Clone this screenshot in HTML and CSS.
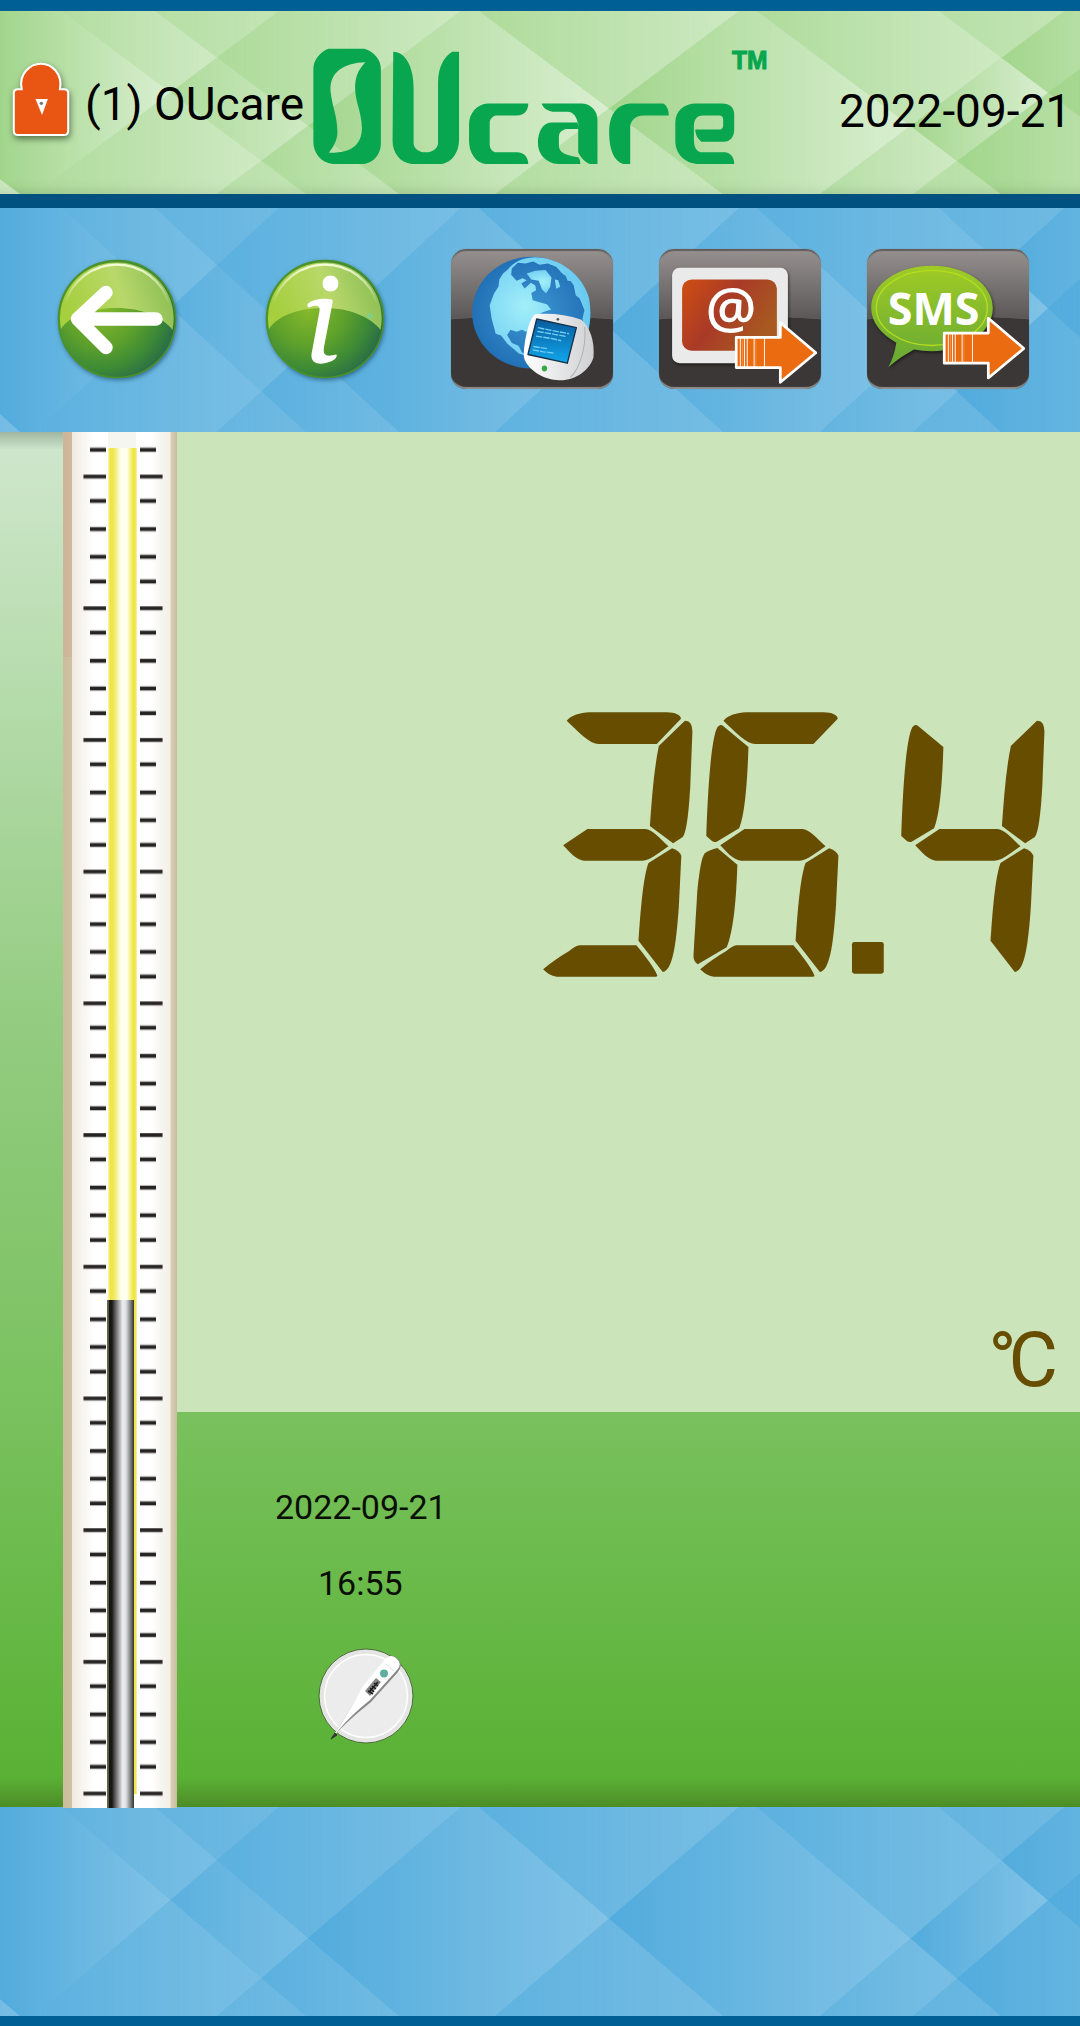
FILE: index.html
```html
<!DOCTYPE html>
<html lang="en">
<head>
<meta charset="utf-8">
<title>OUcare</title>
<link rel="stylesheet" href="styles.css">
</head>
<body>
<svg class="defs" width="0" height="0" aria-hidden="true">
  <defs>
    <linearGradient id="facet"><stop offset="0" stop-color="#fff" stop-opacity="0"/><stop offset="1" stop-color="#fff"/></linearGradient>
    <linearGradient id="facetSoft"><stop offset="0" stop-color="#fff" stop-opacity=".2"/><stop offset="1" stop-color="#fff" stop-opacity=".8"/></linearGradient>
    <symbol id="facets" viewBox="0 0 1080 100" preserveAspectRatio="none">
      <g fill="url(#facet)">
        <path d="M0 0H62L170.5 44.5 27.5 103 0 92Z"/>
        <path d="M308 62.7 470-3.7 609 53.3 447 119.7Z"/>
        <path d="M609 53.3 748-3.7 910.5 62.9 771.5 119.9Z"/>
        <path d="M910.5 62.9 1001.5 25.6 1048 44.7 957 82Z"/>
        <path d="M1001.5 25.6 1182-48 1228-29 1048 44.7Z"/>
        <path d="M1048 44.7 1228-29 1450 61 1269 135Z"/>
        <path d="M957 82 1048 44.7 1269 135 1178 172.7Z"/>
      </g>
      <g fill="url(#facetSoft)">
        <path d="M-112 92H0L20 100H-112Z"/>
        <path d="M170.5 44.5 217 25.4 308 62.7 261.5 81.8Z"/>
        <path d="M217 25.4 379-41 470-3.7 308 62.7Z"/>
        <path d="M31-12.7 77.5-32 217 25.4 170.5 44.5Z"/>
        <path d="M77.5-32 239-98 379-41 217 25.4Z"/>
        <path d="M27.5 103 170.5 44.5 261.5 81.8 118.5 140Z"/>
        <path d="M118.5 140 261.5 81.8 400.5 138.7 257.5 197Z"/>
        <path d="M261.5 81.8 308 62.7 447 119.7 400.5 138.7Z"/>
        <path d="M470-3.7 609-60.7 748-3.7 609 53.3Z"/>
        <path d="M447 119.7 609 53.3 771.5 119.9 609.5 186Z"/>
        <path d="M748-3.7 839-41 1001.5 25.6 910.5 62.9Z"/>
        <path d="M771.5 119.9 910.5 62.9 957 82 818 139Z"/>
        <path d="M818 139 957 82 1178 172.7 1039 230Z"/>
        <path d="M839-41 1019.5-115 1182-48 1001.5 25.6Z"/>
      </g>
    </symbol>

    <radialGradient id="orb" cx=".36" cy=".42" r=".68"><stop offset="0" stop-color="#86b92b"/><stop offset=".45" stop-color="#5fa12b"/><stop offset=".75" stop-color="#3c8a36"/><stop offset="1" stop-color="#27684a"/></radialGradient>
    <linearGradient id="orbShine" x1="0" y1=".4" x2="1" y2=".2"><stop offset="0" stop-color="#a5cf3d"/><stop offset=".5" stop-color="#b9d86a"/><stop offset="1" stop-color="#86bb52"/></linearGradient>
    <linearGradient id="rim" x1="0" y1="0" x2="0" y2="1"><stop offset="0" stop-color="#f4fbd8"/><stop offset="1" stop-color="#f4fbd8" stop-opacity="0"/></linearGradient>
    <symbol id="orbBase" viewBox="0 0 124 124">
      <circle cx="62" cy="62" r="58.500" fill="url(#orb)" stroke="#4c9127" stroke-width="1.500"/>
      <path d="M6 72A56 56 0 0 1 62 5.500A56 56 0 0 1 117.500 73C108 60 86 51 62 51S16 57 6 72Z" fill="url(#orbShine)"/>
      <path d="M10 47A54 54 0 0 1 114 47" fill="none" stroke="url(#rim)" stroke-width="2.200"/>
    </symbol>
    <symbol id="arrow" viewBox="0 0 240 192" preserveAspectRatio="none">
      <path d="M5 52H133V8L236 98 133 186V142H5Z" fill="#eb6b10" stroke="#fff" stroke-width="8" stroke-linejoin="round"/>
      <path d="M17 52V142M29 52V142M37 52V142M57 52V142M87 52V142" stroke="#fff" stroke-width="3" opacity=".9"/>
      <path d="M23 52V142M62 52V142" stroke="#fff" stroke-width="1" opacity=".7"/>
    </symbol>
    <linearGradient id="mail" x1="0" y1="0" x2="1" y2=".5"><stop offset="0" stop-color="#cf4f12"/><stop offset=".5" stop-color="#a93a27"/><stop offset="1" stop-color="#a85a20"/></linearGradient>
    <linearGradient id="bubble" x1="0" y1="0" x2="0" y2="1"><stop offset="0" stop-color="#a0cb26"/><stop offset="1" stop-color="#66a834"/></linearGradient>
    <radialGradient id="sea" cx=".5" cy=".5" r=".55"><stop offset="0" stop-color="#3d97d4"/><stop offset="1" stop-color="#1f6db3"/></radialGradient>
    <radialGradient id="land" cx=".35" cy=".5" r=".7"><stop offset="0" stop-color="#a2effa"/><stop offset="1" stop-color="#62c5ef"/></radialGradient>
    <linearGradient id="screen" x1="0" y1="0" x2="0" y2="1"><stop offset="0" stop-color="#075c9f"/><stop offset="1" stop-color="#12a6ea"/></linearGradient>
    <linearGradient id="shell"><stop offset="0" stop-color="#fff"/><stop offset="1" stop-color="#cfd0d2"/></linearGradient>

    <linearGradient id="tube">
      <stop offset="0" stop-color="#ccbd9c"/><stop offset=".075" stop-color="#cfc0a3"/><stop offset=".082" stop-color="#efe9df"/>
      <stop offset=".16" stop-color="#f7f3ed"/><stop offset=".27" stop-color="#fff"/><stop offset=".78" stop-color="#fff"/>
      <stop offset=".87" stop-color="#f6f4ee"/><stop offset=".935" stop-color="#f3f0e8"/><stop offset=".95" stop-color="#d9cfba"/><stop offset="1" stop-color="#c9bc9c"/>
    </linearGradient>
    <linearGradient id="bore">
      <stop offset="0" stop-color="#fdf7b0"/><stop offset=".08" stop-color="#ede542"/><stop offset=".2" stop-color="#efe85a"/><stop offset=".45" stop-color="#fffff0"/>
      <stop offset=".65" stop-color="#fffff0"/><stop offset=".85" stop-color="#f0e94e"/><stop offset=".93" stop-color="#eee43c"/><stop offset="1" stop-color="#fdf0b8"/>
    </linearGradient>
    <linearGradient id="mercury">
      <stop offset="0" stop-color="#6c6a52"/><stop offset=".07" stop-color="#55533e"/><stop offset=".09" stop-color="#15140f"/><stop offset=".18" stop-color="#191919"/><stop offset=".4" stop-color="#8f8f8f"/>
      <stop offset=".58" stop-color="#ededed"/><stop offset=".7" stop-color="#dfe1e2"/><stop offset=".88" stop-color="#777b7c"/><stop offset="1" stop-color="#35342a"/>
    </linearGradient>
    <pattern id="scale" width="114" height="131.7" y="42.500" patternUnits="userSpaceOnUse">
      <path d="M20.500 2H43M77 2H99.500M27 26.400H43M77 26.400H93M27 54.700H43M77 54.700H93M27 82.300H43M77 82.300H93M27 107H43M77 107H93" stroke="#777" stroke-width="5.500" opacity=".4"/>
      <path d="M20.500 2H43M77 2H99.500M27 26.400H43M77 26.400H93M27 54.700H43M77 54.700H93M27 82.300H43M77 82.300H93M27 107H43M77 107H93" stroke="#262322" stroke-width="3.400"/>
    </pattern>

    <path id="segA" d="M132 92C145 76 170 68 195 67H412C436 67 452 76 452 86L384 162H222C195 162 165 125 132 92Z"/>
    <path id="segB" d="M463 92C476 92 483 100 484 125L478 290C472 400 464 430 457 441L430 460 365 408C370 330 376 240 390 168Z"/>
    <path id="segC" d="M427 475C440 480 449 486 453 497L446 650C438 770 428 840 401 846L333 752C338 670 346 560 361 519Z"/>
    <path id="segD" d="M168 766H327C350 795 378 835 386 857Q385 860 381 860H104C88 858 78 850 66 838C88 818 115 798 139 783C150 774 160 767 168 766Z"/>
    <path id="segE" d="M554 474 610 524C607 620 600 720 580 772L499 823C490 815 487 808 487 797L498 600C504 540 510 500 519 490C528 482 540 478 554 474Z"/>
    <path id="segF" d="M563 105Q568 105 571 109L641 171C638 270 632 370 615 415L552 455Q545 457 539 453L523 438C526 340 534 150 554 112Q558 106 563 105Z"/>
    <path id="segG" d="M190 417H352C372 418 392 444 417 469C390 488 366 512 344 512H180C158 510 138 484 122 466Z"/>
  </defs>
</svg>

<div class="app">
  <header class="header">
    <svg class="facets"><use href="#facets"/></svg>
    <svg class="lock" viewBox="30 180 180 255" preserveAspectRatio="none">
      <path d="M64 268C54 220 90 191 120 191S184 220 175 268H187Q199 268 199 280V392Q199 405 186 405H54Q41 405 41 392V280Q41 268 53 268Z" fill="#e95513" stroke="#fff" stroke-width="6"/>
      <path d="M104 297H140L123 345Z" fill="#fff"/><circle cx="121" cy="310" r="5" fill="#777"/>
    </svg>
    <span class="user">(1) OUcare</span>
    <svg class="logo" viewBox="905 145 1330 355" preserveAspectRatio="none" role="img" aria-label="OUcare">
      <g fill="#08a64e">
        <path fill-rule="evenodd" d="M953 147H1057C1085 155 1105 180 1105 208V432C1105 462 1085 494 1048 494H965C930 490 909 460 909 428V208C909 180 930 155 953 147ZM1060 188C1000 190 955 215 959 276C963 320 978 345 979 400C978 425 965 445 954 460C1015 462 1050 440 1050 385C1048 330 1030 310 1030 260C1032 225 1042 208 1060 188Z"/>
        <path d="M1141 156C1175 156 1200 200 1200 265V430C1200 447 1215 459 1235 459S1271 447 1271 430V250C1271 200 1290 170 1312 156H1332V420C1332 465 1305 494 1275 494H1195C1160 490 1139 460 1139 425Z"/>
        <path d="M1415 312H1533C1533 333 1522 348 1500 348H1440C1428 350 1421 360 1421 370V435C1421 448 1430 459 1441 459H1500C1522 459 1533 475 1533 494H1408C1380 490 1361 460 1361 425V375C1361 340 1385 314 1415 312Z"/>
        <path fill-rule="evenodd" d="M1572 312H1690C1716 314 1734 335 1734 362V494H1713C1700 492 1685 475 1678 459V385C1678 350 1660 337 1648 337H1610C1590 337 1575 325 1572 312ZM1600 369H1678V389H1645C1630 391 1622 400 1622 412V440C1622 458 1640 468 1678 474C1683 478 1684 486 1684 494H1620C1585 492 1561 465 1561 430C1562 395 1575 370 1600 369Z"/>
        <path d="M1830 312H1925C1935 318 1941 330 1941 348H1868C1842 348 1829 365 1829 385V494H1812C1785 490 1768 455 1768 400C1768 345 1790 315 1830 312Z"/>
        <path fill-rule="evenodd" d="M2020 312H2095C2120 312 2131 325 2131 345V390C2131 412 2120 427 2100 427H2036C2025 418 2018 405 2018 390H2088C2096 390 2099 385 2099 378V360C2099 352 2095 348 2088 348H2040C2022 349 2014 360 2014 380V420C2014 445 2022 459 2040 459H2105C2122 462 2131 475 2131 494H2022C1985 490 1960 462 1960 425V370C1960 335 1985 312 2020 312Z"/>
      </g>
      <text class="tm" x="2125" y="209" textLength="103" lengthAdjust="spacingAndGlyphs">TM</text>
    </svg>
    <time class="today">2022-09-21</time>
  </header>

  <nav class="toolbar">
    <svg class="facets"><use href="#facets"/></svg>
    <a class="orb" aria-label="Back"><svg viewBox="0 0 124 124"><use href="#orbBase"/><path d="M23 62H101M51 35.500 22.500 62 51 90.500" fill="none" stroke="#fff" stroke-width="13.500" stroke-linecap="round" stroke-linejoin="round"/></svg></a>
    <a class="orb" aria-label="Info"><svg viewBox="0 0 124 124"><use href="#orbBase"/><circle cx="67.500" cy="26.500" r="8" fill="#fff"/><path d="M44.500 47C50 42 60 41 69 42.500Q70 43 69.500 46L61 90C59.500 99 64 100 73 97.500Q75 98 72 102C64 108 47 110 48.500 97L56.500 54C57.500 48.500 53 47.500 46 50.500Q44 50 44.500 47Z" fill="#fff"/><circle cx="107" cy="59" r="3" fill="#7ad09a" opacity=".7"/></svg></a>
    <a class="tile" aria-label="Web">
      <svg viewBox="37 27 482 418" preserveAspectRatio="none">
        <ellipse cx="276" cy="217" rx="176" ry="167" fill="url(#sea)"/>
        <path d="M181 117 192 100 206 88C225 65 250 54 285 52C360 52 430 105 448 175C455 215 452 260 440 285L428 235 434 210 420 175 408 165 402 135 385 112 368 100 350 80 325 70 300 74 282 64 258 70 236 68 218 85 216 104 232 122 250 114 262 120 246 130 256 145 275 128 288 136 290 150 276 158 280 180 300 186 322 192 335 208 310 216 290 226 272 262 262 275 248 268 232 274 214 268 204 284 218 308 238 316 248 335 262 345 240 340 205 310 186 285 170 280 158 235 152 195 165 160 178 140Z" fill="url(#land)"/>
        <path d="M262 100 288 92 318 90 336 112 332 140 320 160 308 148 298 122 276 118ZM346 118 356 120 362 140 350 146ZM372 90 392 108 400 124 384 122Z" fill="url(#land)"/>
        <path d="M287 222C330 218 380 222 425 238C450 260 465 300 461 350C450 390 400 425 350 418C310 415 262 385 254 350C252 320 265 240 287 222Z" fill="url(#shell)"/>
        <path d="M435 260C440 320 420 385 392 410" fill="none" stroke="#aeb0b2" stroke-width="3"/>
        <path d="M292 236 410 262 383 368 266 342Z" fill="url(#screen)" stroke="#16314a" stroke-width="4" stroke-linejoin="round"/>
        <path d="M296 262 335 270 388 280M294 273 345 282 380 288M290 287 340 295 365 301M282 318 325 325M280 328 312 334 345 338" stroke="#72cdf5" stroke-width="4" fill="none" stroke-dasharray="19 3"/>
        <ellipse cx="315" cy="384" rx="8" ry="9" fill="#35a84a"/><circle cx="355" cy="237" r="4" fill="#555"/>
      </svg>
    </a>
    <a class="tile" aria-label="Email">
      <svg viewBox="346 147 470 418" preserveAspectRatio="none">
        <rect class="lift" x="384" y="203" width="336" height="285" rx="22" fill="#ebeaea"/>
        <rect x="413" y="238" width="275" height="213" rx="28" fill="url(#mail)"/>
        <text class="at" x="555" y="382">@</text>
        <use href="#arrow" x="565" y="359" width="240" height="192"/>
      </svg>
    </a>
    <a class="tile" aria-label="Send SMS">
      <svg viewBox="950 147 470 418" preserveAspectRatio="none">
        <path class="lift" d="M1138 197C1235 197 1315 250 1315 323S1235 452 1138 452Q1110 452 1086 447C1065 460 1040 475 1012 500Q1030 465 1035 427C990 400 962 365 962 323C962 250 1041 197 1138 197Z" fill="url(#bubble)"/>
        <ellipse cx="1138" cy="323" rx="161" ry="112" fill="none" stroke="#b4dc20" stroke-width="4"/>
        <text class="sms" x="1143" y="375" textLength="266" lengthAdjust="spacingAndGlyphs">SMS</text>
        <use href="#arrow" x="1169" y="346" width="240" height="192"/>
      </svg>
    </a>
  </nav>

  <main class="reading">
    <svg class="thermometer" viewBox="0 0 114 1376" role="img" aria-label="Thermometer scale">
      <rect width="114" height="1376" fill="url(#tube)"/>
      <rect width="9" height="225" fill="#cfa58a" opacity=".25"/>
      <rect x="45" width="28" height="18" fill="#f6f6f0"/>
      <rect x="45" y="16" width="29" height="1346" fill="url(#bore)"/>
      <rect width="114" height="1376" fill="url(#scale)"/>
      <rect x="44" y="868" width="27" height="508" fill="url(#mercury)"/>
    </svg>
    <div class="panel">
      <section class="lcd">
        <svg class="digits" viewBox="60 60 1420 810" preserveAspectRatio="none" role="img" aria-label="36.4">
          <g fill="#664d00">
            <use href="#segA"/><use href="#segB"/><use href="#segC"/><use href="#segD"/><use href="#segG"/>
            <use href="#segA" x="439"/><use href="#segC" x="440"/><use href="#segD" x="440"/><use href="#segE"/><use href="#segF"/><use href="#segG" x="440"/>
            <rect x="931" y="756" width="89" height="95" rx="7"/>
            <use href="#segB" x="986"/><use href="#segC" x="986"/><use href="#segF" x="546"/><use href="#segG" x="986"/>
          </g>
        </svg>
        <div class="unit">°C</div>
      </section>
      <section class="record">
        <time class="date">2022-09-21</time>
        <time class="time">16:55</time>
        <svg class="probe" viewBox="0 0 104 104">
          <circle cx="52" cy="52" r="47" fill="#e4e4e3" stroke="#496b39" stroke-width="1"/>
          <circle cx="52" cy="52" r="41.500" fill="#ececec" stroke="#fff" stroke-width="1.500"/>
          <path d="M18 94 21 89C34 70 40 58 50 42L73 14Q78 9 83 14Q90 20 84 28L57 58C45 68 32 78 18 94Z" fill="#888"/>
          <path d="M18 93 21 89C34 70 40 58 49 42L72 14Q77 10 82 14Q89 20 83 26L56 56C44 66 32 76 20 92Z" fill="#fff"/>
          <path d="M17 95 21 89 23 91Z" fill="#333" stroke="#333"/>
          <path d="M72 20 80 27" stroke="#ddd"/>
          <circle cx="70" cy="29.500" r="4" fill="#5eafa2"/>
          <path d="M51 47 62 34 67 38 56 52Z" fill="#858585"/>
          <path d="M54 47 59 50M56 44 60 48M58 42 62 45M60 39 64 42M55 48 64 38" stroke="#1b1b1b" stroke-width="1.500"/>
        </svg>
      </section>
    </div>
  </main>

  <footer class="footer">
    <svg class="facets"><use href="#facets"/></svg>
  </footer>
</div>
</body>
</html>
```
FILE: styles.css
```css
* { box-sizing: border-box; }

body {
  margin: 0;
  font-family: Roboto, "Liberation Sans", sans-serif;
  color: #000;
}

.defs { position: absolute; }

.app {
  width: 1080px;
  height: 2026px;
  display: flex;
  flex-direction: column;
  overflow: hidden;
}

.facets {
  position: absolute;
  inset: 0;
  width: 100%;
  height: 100%;
  z-index: -1;
}

.header {
  position: relative;
  z-index: 0;
  height: 208px;
  flex: none;
  display: flex;
  align-items: flex-start;
  padding-left: 10px;
  background: #a2d68c;
  border-top: 11px solid #005f95;
  border-bottom: 14px solid #005080;
  box-shadow: inset 0 -12px 10px -8px rgba(70, 110, 50, .25);
}

.header .facets { opacity: .6; }

.lock {
  width: 62px;
  height: 85px;
  margin-top: 49px;
  filter: drop-shadow(1px 3px 3px rgba(40, 60, 30, .65));
}

.user {
  width: 227px;
  margin: 66px 0 0 13px;
  font-size: 46px;
  line-height: 54px;
  white-space: nowrap;
}

.logo {
  width: 458px;
  height: 118px;
  margin-top: 37px;
  overflow: visible;
}

.tm {
  font: bold 78px "Liberation Sans", sans-serif;
  fill: #08a64e;
  stroke: #08a64e;
  stroke-width: 3px;
}

.today {
  margin: 73px 0 0 69px;
  font-size: 46px;
  line-height: 54px;
  white-space: nowrap;
}

.toolbar {
  position: relative;
  z-index: 0;
  height: 224px;
  flex: none;
  display: grid;
  grid-template-columns: repeat(5, 207.8px);
  justify-items: center;
  padding: 0 28px 0 13px;
  background: #52acdd;
}

.toolbar .facets,
.footer .facets { opacity: .28; }

.orb {
  width: 124px;
  height: 124px;
  margin-top: 49px;
}

.orb svg {
  display: block;
  filter: drop-shadow(1px 2px 2px rgba(20, 70, 100, .6));
}

.tile {
  width: 162px;
  height: 140px;
  margin-top: 41px;
  border-radius: 15px;
  background:
    radial-gradient(ellipse 180% 52% at 50% 100%, #3b3736 99%, transparent 100%),
    linear-gradient(#96918f, #5b5756 50%);
  box-shadow: inset 0 3px 1px -1px #605d5c, inset 0 -3px 1px -1px #918e8c, 0 0 1px #777;
}

.tile svg {
  display: block;
  width: 100%;
  height: 100%;
}

.lift { filter: drop-shadow(3px 5px 5px rgba(0, 0, 0, .5)); }

.at {
  font: 600 165px "Open Sans", "Noto Sans", sans-serif;
  fill: #fff;
  text-anchor: middle;
}

.sms {
  font: bold 136px "Open Sans", "Noto Sans", sans-serif;
  fill: #fff;
  text-anchor: middle;
}

.reading {
  height: 1375px;
  flex: none;
  display: flex;
  padding-left: 63px;
  background:
    linear-gradient(rgba(90, 110, 90, .4), transparent 18px),
    linear-gradient(transparent 1345px, rgba(60, 90, 20, .4) 1375px),
    linear-gradient(#cfe6cf, #cbe5c7 50px, #93cc80 595px, #79c15e 980px, #5cb338 1310px, #58af33);
}

.thermometer {
  position: relative;
  z-index: 1;
  width: 114px;
  height: 1376px;
  flex: none;
}

.panel {
  flex: 1;
  display: flex;
  flex-direction: column;
}

.lcd {
  height: 980px;
  display: flex;
  flex-direction: column;
  align-items: flex-end;
  justify-content: space-between;
  padding: 278px 24px 7px 0;
  background: #cbe4ba;
}

.digits {
  width: 507px;
  height: 270px;
  margin-right: 8px;
}

.unit {
  margin-right: 6px;
  font-size: 76px;
  line-height: 90px;
  letter-spacing: -8px;
  color: #664d00;
}

.record {
  flex: 1;
  display: flex;
  flex-direction: column;
  align-items: flex-start;
}

.date,
.time {
  font-size: 34px;
  line-height: 40px;
  color: #0a0f06;
}

.date { margin: 75px 0 0 98px; }

.time { margin: 36px 0 0 141px; }

.probe {
  width: 104px;
  height: 104px;
  margin: 41px 0 0 137px;
}

.footer {
  position: relative;
  z-index: 0;
  height: 219px;
  flex: none;
  background: #52acdd;
  border-bottom: 10px solid #005f95;
}
```
